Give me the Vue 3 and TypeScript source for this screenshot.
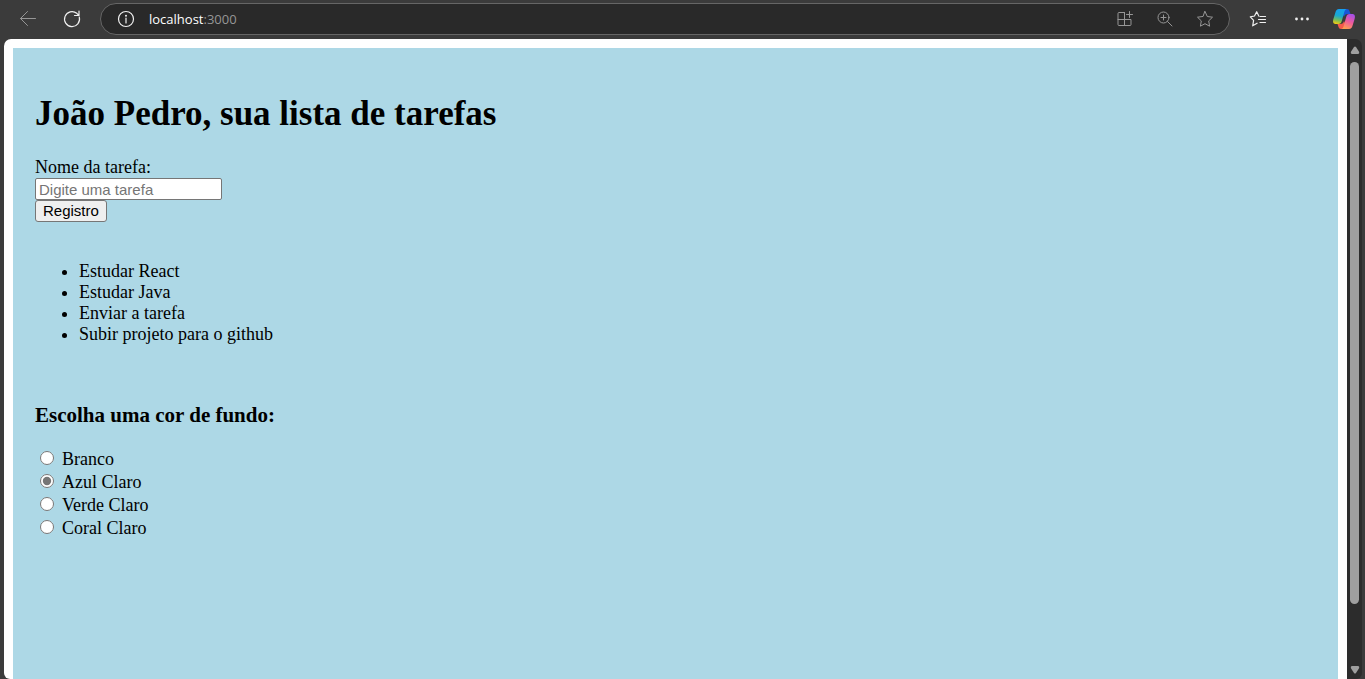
<script setup lang="ts">
import { computed, ref } from 'vue'

interface ColorOption {
  label: string
  value: string
}

const colors: ColorOption[] = [
  { label: 'Branco', value: 'white' },
  { label: 'Azul Claro', value: 'lightblue' },
  { label: 'Verde Claro', value: 'lightgreen' },
  { label: 'Coral Claro', value: 'lightcoral' },
]

const tasks = ref<string[]>(['Estudar React', 'Estudar Java', 'Enviar a tarefa', 'Subir projeto para o github'])
const draft = ref('')
const selected = ref('lightblue')
const pageStyle = computed(() => ({ backgroundColor: selected.value }))

function register(): void {
  const name = draft.value.trim()
  if (!name) return
  tasks.value.push(name)
  draft.value = ''
}
</script>

<template>
  <div class="browser">
    <header class="toolbar">
      <button class="tool back" type="button" aria-label="Voltar">
        <svg width="20" height="20" viewBox="0 0 20 20"><path d="M17.500 9.500h-15M9.500 2.500l-7 7 7 7" /></svg>
      </button>
      <button class="tool reload" type="button" aria-label="Recarregar">
        <svg width="20" height="20" viewBox="0 0 20 20" stroke-width="1.2"><path d="M17.300 8.200A7.500 7.500 0 1 1 14.800 4.300L17 6.500M17 2v4.500h-4.500" /></svg>
      </button>
      <div class="address">
        <button class="tool info" type="button" aria-label="Informações do site">
          <svg width="20" height="20" viewBox="0 0 20 20" stroke-width="1.2"><circle cx="10" cy="10" r="7.500" /><path d="M10 9v5" /><circle class="dot" cx="10" cy="6.700" r="1" /></svg>
        </button>
        <span class="url">localhost<span class="port">:3000</span></span>
        <div class="address-tools">
          <button class="tool" type="button" aria-label="Aplicativos">
            <svg width="20" height="20" viewBox="0 0 20 20"><path d="M9.500 3.500H4a1 1 0 0 0-1 1v11a1 1 0 0 0 1 1h11a1 1 0 0 0 1-1V10.500H3M9.500 3.500v13M14.500 2.500v6M11.500 5.500h6" /></svg>
          </button>
          <button class="tool" type="button" aria-label="Zoom">
            <svg width="20" height="20" viewBox="0 0 20 20"><circle cx="8.500" cy="8.500" r="5.500" /><path d="M12.500 12.500l4.500 4.500M8.500 6v5M6 8.500h5" /></svg>
          </button>
          <button class="tool" type="button" aria-label="Adicionar aos favoritos">
            <svg width="20" height="20" viewBox="0 0 20 20"><path d="M10 2.500l2.300 5 5.200.7-3.800 3.700.9 5.300-4.600-2.500-4.600 2.500.9-5.300-3.800-3.700 5.200-.7z" /></svg>
          </button>
        </div>
      </div>
      <button class="tool favorites" type="button" aria-label="Favoritos">
        <svg width="20" height="20" viewBox="0 0 20 20" stroke-width="1.2"><path d="M10.800 7L8.700 2.700 6.500 7l-4.200.8 3.300 3.600-.9 5.400 4.400-2.600M12 7.500h5.500M10.500 10.500h7M12 13.500h5.500" /></svg>
      </button>
      <button class="tool more" type="button" aria-label="Mais opções">
        <svg width="20" height="20" viewBox="0 0 20 20"><circle class="dot" cx="4.500" cy="10" r="1.400" /><circle class="dot" cx="10" cy="10" r="1.400" /><circle class="dot" cx="15.500" cy="10" r="1.400" /></svg>
      </button>
      <button class="tool copilot" type="button" aria-label="Copilot">
        <svg width="24" height="24" viewBox="0 0 24 24">
          <defs>
            <linearGradient id="cool" x1="0.500" y1="0" x2="0.300" y2="1">
              <stop offset="0" stop-color="#169ff0" /><stop offset="0.450" stop-color="#1aa8cf" /><stop offset="0.750" stop-color="#78bd58" /><stop offset="1" stop-color="#f0ca13" />
            </linearGradient>
            <linearGradient id="warm" x1="0.700" y1="0" x2="0.300" y2="1">
              <stop offset="0" stop-color="#a650e8" /><stop offset="0.500" stop-color="#ef5a9b" /><stop offset="1" stop-color="#ffa04f" />
            </linearGradient>
          </defs>
          <path fill="#1856d8" d="M8 2h7c1.500 0 2.100.8 2.500 2l1 3h-3c-2 0-3 1-3.500 3z" />
          <path fill="#f4594b" d="M16 22H9c-1.500 0-2.100-.8-2.500-2l-1-3h3c2 0 3-1 3.500-3z" />
          <path fill="url(#cool)" d="M7 2h7.500c-1.300.5-1.800 1.500-2.200 3L9.800 14c-.6 2-1.300 3-3.500 3H4c-3 0-3.400-2.200-2.600-5l2-6.500C4 3.500 4.900 2 7 2z" />
          <path fill="url(#warm)" d="M17 22H9.500c1.300-.5 1.800-1.500 2.200-3l2.500-9c.6-2 1.300-3 3.500-3H20c3 0 3.400 2.200 2.600 5l-2 6.500c-.6 2-1.500 3.500-3.600 3.500z" />
        </svg>
      </button>
    </header>

    <div class="viewport">
      <div class="document">
        <main class="page" :style="pageStyle">
          <h1>João Pedro, sua lista de tarefas</h1>
          <form class="task-form" @submit.prevent="register">
            <label for="task">Nome da tarefa:</label>
            <input id="task" v-model="draft" type="text" placeholder="Digite uma tarefa" />
            <button type="submit">Registro</button>
          </form>
          <ul>
            <li v-for="task in tasks" :key="task">{{ task }}</li>
          </ul>
          <h3 id="color-title">Escolha uma cor de fundo:</h3>
          <div class="colors" role="radiogroup" aria-labelledby="color-title">
            <label v-for="color in colors" :key="color.value">
              <input v-model="selected" type="radio" name="color" :value="color.value" />
              <span>{{ color.label }}</span>
            </label>
          </div>
        </main>
      </div>
      <div class="scrollbar" aria-hidden="true">
        <svg width="10" height="8" viewBox="0 0 10 8"><path d="M4 1Q5 0 6 1L9.200 6Q9.500 8 8 8H2Q.5 8 .8 6z" /></svg>
        <div class="track"><div class="thumb"></div></div>
        <svg width="10" height="8" viewBox="0 0 10 8"><path d="M4 7Q5 8 6 7L9.200 2Q9.500 0 8 0H2Q.5 0 .8 2z" /></svg>
      </div>
    </div>
  </div>
</template>

<style>
body {
  margin: 0;
  overflow: hidden;
}
</style>

<style scoped>
.browser {
  display: flex;
  flex-direction: column;
  height: 100vh;
  background: #3b3b3b;
}
.toolbar {
  display: flex;
  flex: none;
  align-items: center;
  box-sizing: border-box;
  height: 39px;
  padding: 0 9px 1px 18px;
}
.tool {
  display: grid;
  flex: none;
  place-items: center;
  width: 20px;
  height: 20px;
  padding: 0;
  border: 0;
  background: none;
  color: #969696;
}
.tool svg {
  fill: none;
  stroke: currentColor;
  stroke-linecap: round;
  stroke-linejoin: round;
}
.tool .dot {
  fill: currentColor;
  stroke: none;
}
.reload {
  margin: 0 18px 0 24px;
}
.reload,
.info,
.favorites,
.more {
  color: #f0f0f0;
}
.address {
  display: flex;
  flex: 1;
  align-items: center;
  box-sizing: border-box;
  height: 32px;
  padding: 0 14px 0 15px;
  border: 1px solid #666;
  border-radius: 16px;
  background: #292929;
}
.url {
  margin-left: 13px;
  color: #fff;
  font: 13px/20px "Open Sans", "Noto Sans", sans-serif;
}
.port {
  color: #969696;
}
.address-tools {
  display: flex;
  gap: 20px;
  margin-left: auto;
}
.favorites {
  margin-left: 18px;
}
.more {
  margin: 0 20px 0 24px;
}
.tool.copilot {
  width: 24px;
  height: 24px;
}
.copilot svg {
  stroke: none;
}
.viewport {
  display: flex;
  flex: 1;
  min-height: 0;
  margin: 0 3px 0 4px;
  overflow: hidden;
  border-radius: 7px 7px 6px 6px;
  background: #2c2c2c;
}
.document {
  flex: 1;
  box-sizing: border-box;
  padding: 9px 9px 0;
  overflow: hidden;
  background: #fff;
}
.page {
  box-sizing: border-box;
  min-height: 110vh;
  padding: 22px;
  color: #000;
  font: 18px/21px "Liberation Serif", "Times New Roman", serif;
}
h1 {
  margin: 22px 0;
  font-size: 35px;
  line-height: 43px;
}
.task-form {
  display: flex;
  flex-direction: column;
  align-items: flex-start;
}
.task-form input,
.task-form button {
  box-sizing: border-box;
  height: 22px;
  border: 1px solid #767676;
  border-radius: 2px;
  font: 15px/18px "Liberation Sans", Arial, sans-serif;
}
.task-form input {
  width: 187px;
  padding: 1px 3px;
  background: #fff;
}
.task-form input::placeholder {
  color: #757575;
}
.task-form button {
  padding: 1px 7px;
  border-radius: 3px;
  background: #efefef;
  color: #000;
}
ul {
  margin: 39px 0 59px;
  padding-left: 44px;
}
h3 {
  margin: 0 0 22px;
  font-size: 21px;
  line-height: 22px;
}
.colors {
  display: flex;
  flex-direction: column;
}
.colors label {
  display: flex;
  align-items: center;
  gap: 8px;
  height: 23px;
}
.colors input {
  width: 14px;
  height: 14px;
  margin: 0 0 3px 5px;
  accent-color: #767676;
}
.scrollbar {
  display: flex;
  flex: none;
  flex-direction: column;
  align-items: center;
  gap: 8px;
  box-sizing: border-box;
  width: 15px;
  padding: 7px 0 5px;
}
.scrollbar svg {
  flex: none;
  fill: #9f9f9f;
}
.track {
  flex: 1;
  width: 9px;
}
.thumb {
  height: 91%;
  border-radius: 5px;
  background: #9f9f9f;
}
</style>
